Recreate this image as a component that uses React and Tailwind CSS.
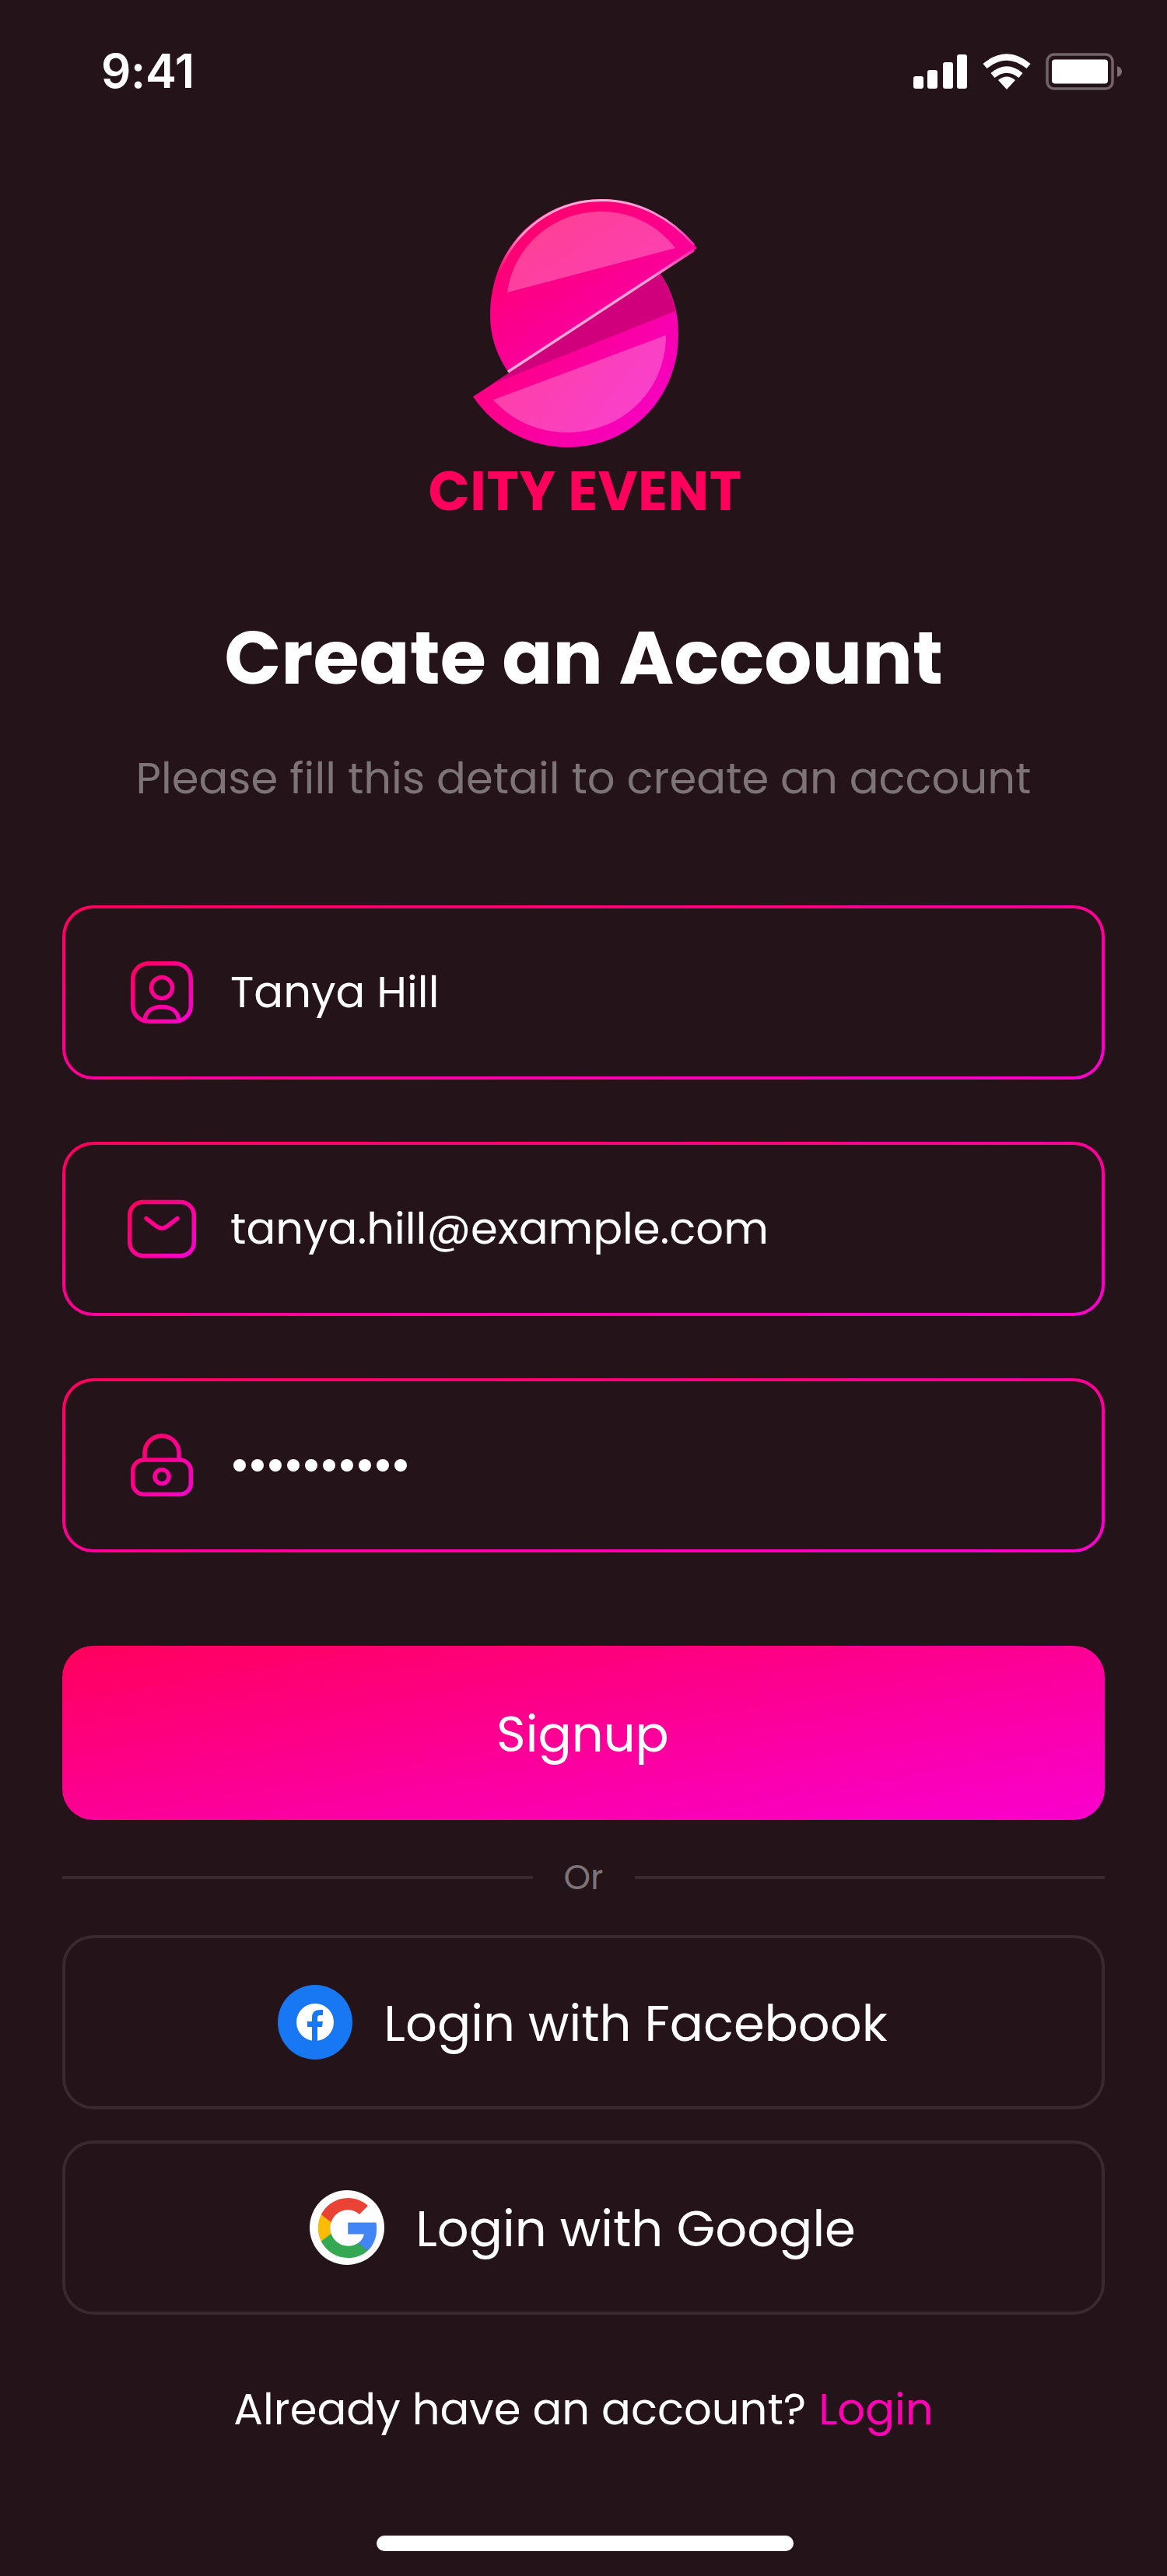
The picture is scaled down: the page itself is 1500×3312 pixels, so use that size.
const Text = ({ className, children }) => (
  <span className={'block whitespace-nowrap ' + className}>{children}</span>
);

function Logo() {
  return (
    <svg width="304" height="330" viewBox="600 250 304 330" fill="none">
      <defs>
        <linearGradient id="top" gradientUnits="userSpaceOnUse" x1="650" y1="280" x2="780" y2="480">
          <stop stopColor="#ff0068" /><stop offset="1" stopColor="#f800b0" />
        </linearGradient>
        <linearGradient id="bot" gradientUnits="userSpaceOnUse" x1="650" y1="430" x2="830" y2="570">
          <stop stopColor="#ff0080" /><stop offset="1" stopColor="#f500c4" />
        </linearGradient>
        <linearGradient id="rim" gradientUnits="userSpaceOnUse" x1="640" y1="0" x2="895" y2="0">
          <stop stopColor="#ff0070" /><stop offset=".12" stopColor="#ff9aca" /><stop offset=".5" stopColor="#ffb2dc" /><stop offset=".85" stopColor="#ff8ccb" /><stop offset="1" stopColor="#fb20a8" />
        </linearGradient>
        <linearGradient id="cut" gradientUnits="userSpaceOnUse" x1="653" y1="0" x2="896" y2="0">
          <stop stopColor="#ffa8d6" /><stop offset=".75" stopColor="#fb9fd4" /><stop offset="1" stopColor="#fb20a8" />
        </linearGradient>
      </defs>
      <path d="M608 510L849 352C864 374 872 400 872 430C872 510 812 575 730 575C680 575 636 551 608 510Z" fill="url(#bot)" />
      <path d="M653 480L849 352Q863 374 868 400L632 494Z" fill="#d0007c" />
      <path d="M634 514L856 431C856 502 800 556 730 556C692 556 658 541 634 514Z" fill="#fff" fillOpacity=".25" />
      <path d="M653 478C638 456 630 432 630 405C630 322 690 256 774 256C822 256 866 282 896 319Z" fill="url(#top)" />
      <path d="M641 350C662 296 712 257.500 774 257.500C821 257.500 863 281 892 315" stroke="url(#rim)" strokeWidth="3" />
      <path d="M653 478L892 321.500" stroke="url(#cut)" strokeWidth="3.500" />
      <path d="M652 376C660 316 712 272 772 272C812 272 846 290 868 319Z" fill="#fff" fillOpacity=".25" />
    </svg>
  );
}

function Grad({ id }) {
  return (
    <defs>
      <linearGradient id={id} x1="12" y1="12" x2="84" y2="84" gradientUnits="userSpaceOnUse">
        <stop stopColor="#ff005c" /><stop offset="1" stopColor="#f900cf" />
      </linearGradient>
    </defs>
  );
}

function UserIcon() {
  return (
    <svg width="96" height="96" viewBox="0 0 96 96" fill="none" stroke="url(#gu)" strokeWidth="5.500">
      <Grad id="gu" />
      <rect x="10.750" y="10.750" width="74.500" height="74.500" rx="20" />
      <circle cx="48" cy="42" r="13.500" />
      <path d="M26 84C27 72 36 66.500 48 66.500S69 72 70 84" />
    </svg>
  );
}

function MailIcon() {
  return (
    <svg width="96" height="96" viewBox="0 0 96 96" fill="none" stroke="url(#gm)" strokeWidth="5.500">
      <Grad id="gm" />
      <rect x="6.750" y="13.500" width="82.500" height="69" rx="17" />
      <path d="M28 34.500L41 44.500Q48 50 55 44.500L68 34.500" strokeLinecap="round" />
    </svg>
  );
}

function LockIcon() {
  return (
    <svg width="96" height="96" viewBox="0 0 96 96" fill="none" stroke="url(#gl)" strokeWidth="5.500">
      <Grad id="gl" />
      <rect x="10.750" y="41" width="74.500" height="44.250" rx="14" />
      <path d="M26 41V32a22 22 0 0 1 44 0V41" />
      <circle cx="48" cy="62.500" r="9" />
    </svg>
  );
}

function Field({ icon, children }) {
  return (
    <div className="h-[224px] rounded-[40px] bg-[linear-gradient(to_bottom_right,#ff005c,#f900cf)] p-1">
      <div className="flex h-full items-center gap-[40px] rounded-[36px] bg-[#241318] pl-[76px] text-white">
        {icon}
        {children}
      </div>
    </div>
  );
}

function Status() {
  return (
    <header className="flex h-[176px] items-start justify-between pl-[130px] pr-[54px] pt-[68px]">
      <Text className="-mt-[10px] font-['Inter'] text-[60px] font-semibold leading-[66px] tracking-[-0.300px]">9:41</Text>
      <svg width="276" height="48" viewBox="0 0 276 48" fill="#fff">
        <rect x="4" y="30" width="13" height="16" rx="3" /><rect x="22" y="22" width="13" height="24" rx="3" />
        <rect x="42" y="12" width="13" height="34" rx="3" /><rect x="60" y="2" width="13" height="44" rx="3" />
        <g fill="none" stroke="#fff" strokeWidth="8"><path d="M96 17Q124-6 152 17" /><path d="M106 29Q124 14 142 29" /></g>
        <path d="M124 47L113 35Q124 26 135 35Z" />
        <rect x="176" y="2" width="84" height="44" rx="9" fill="none" stroke="#fff" strokeOpacity=".35" strokeWidth="3.500" />
        <rect x="182" y="8.500" width="72" height="31" rx="4" />
        <path d="M266 17Q272 19 272 24T266 31Z" fillOpacity=".4" />
      </svg>
    </header>
  );
}

const Rule = () => <i className="h-1 flex-1 bg-[#3a292f]" />;

function SocialButton({ icon, children }) {
  return (
    <button className="flex h-[224px] w-full items-center justify-center gap-10 rounded-[40px] border-4 border-[#3a292f] pr-0.5">
      {icon}
      <Text className="pt-1 text-[64px]">{children}</Text>
    </button>
  );
}

function FacebookLogo() {
  return (
    <svg width="96" height="96" viewBox="0 0 96 96">
      <circle cx="48" cy="48" r="48" fill="#1877f2" />
      <circle cx="48" cy="48" r="24" fill="#fff" />
      <path d="M44 72V54H38V47H44V42Q44 32 54 32H58V39H54Q51 39 51 43V47H58L57 54H51V72Z" fill="#1877f2" />
    </svg>
  );
}

function GoogleLogo() {
  return (
    <span className="flex size-24 items-center justify-center rounded-full bg-white">
      <svg width="77" height="77" viewBox="0.800 1 22 22">
        <path d="M22.560 12.250c0-.780-.070-1.530-.200-2.250H12v4.260h5.920c-.260 1.370-1.040 2.530-2.210 3.310v2.770h3.570c2.080-1.920 3.280-4.740 3.280-8.090z" fill="#4285f4" />
        <path d="M12 23c2.970 0 5.460-.980 7.280-2.660l-3.570-2.770c-.980.660-2.230 1.060-3.710 1.060-2.860 0-5.290-1.930-6.160-4.530H2.180v2.840C3.990 20.530 7.700 23 12 23z" fill="#34a853" />
        <path d="M5.840 14.090c-.220-.660-.350-1.360-.350-2.090s.130-1.430.350-2.090V7.070H2.180C1.430 8.550 1 10.220 1 12s.430 3.450 1.180 4.930z" fill="#fbbc05" />
        <path d="M12 5.380c1.620 0 3.060.560 4.210 1.640l3.150-3.150C17.450 2.090 14.970 1 12 1 7.700 1 3.990 3.470 2.180 7.070l3.660 2.840c.870-2.600 3.300-4.530 6.160-4.530z" fill="#ea4335" />
      </svg>
    </span>
  );
}

export default function App() {
  return (
    <main className="flex h-[3312px] w-[1500px] flex-col overflow-hidden bg-[#241318] font-['Poppins','Inter',sans-serif] text-white">
      <Status />
      <div className="mt-[74px] flex justify-center pl-1"><Logo /></div>
      <Text className="mt-[10px] pl-1 text-center text-[70px] font-bold leading-[84px] tracking-[0.500px] text-[#ff005c]">CITY EVENT</Text>
      <h1 className="mt-[116px] whitespace-nowrap text-center text-[96px] font-bold leading-[112px]">Create an Account</h1>
      <Text className="mt-[57px] text-center text-[56px] leading-[84px] text-[#7c7476]">Please fill this detail to create an account</Text>
      <form className="mx-20 mt-[121px] flex flex-col gap-20">
        <Field icon={<UserIcon />}><Text className="text-[56px]">Tanya Hill</Text></Field>
        <Field icon={<MailIcon />}><Text className="text-[56px]">tanya.hill@example.com</Text></Field>
        <Field icon={<LockIcon />}>
          <div className="flex gap-[7px] pl-1">{Array.from({ length: 10 }, (_, i) => <i key={i} className="size-4 rounded-full bg-white" />)}</div>
        </Field>
      </form>
      <button className="mx-20 mt-[120px] flex h-[224px] shrink-0 items-center justify-center rounded-[40px] bg-[linear-gradient(to_bottom_right,#ff005c,#f900cf)] pr-0.5 pt-1 text-[64px]">Signup</button>
      <div className="mx-20 mt-[38px] flex h-[72px] items-center gap-10 text-[#7c7476]">
        <Rule /><Text className="text-[44px]">Or</Text><Rule />
      </div>
      <div className="mx-20 mt-[38px] flex flex-col gap-10">
        <SocialButton icon={<FacebookLogo />}>Login with Facebook</SocialButton>
        <SocialButton icon={<GoogleLogo />}>Login with Google</SocialButton>
      </div>
      <div className="mt-20 flex justify-center gap-4 text-[56px] leading-[84px]"><Text>Already have an account?</Text><Text className="text-[#ff00b4]">Login</Text></div>
      <div className="ml-[484px] mt-[120px] h-5 w-[536px] rounded-full bg-white" />
    </main>
  );
}
